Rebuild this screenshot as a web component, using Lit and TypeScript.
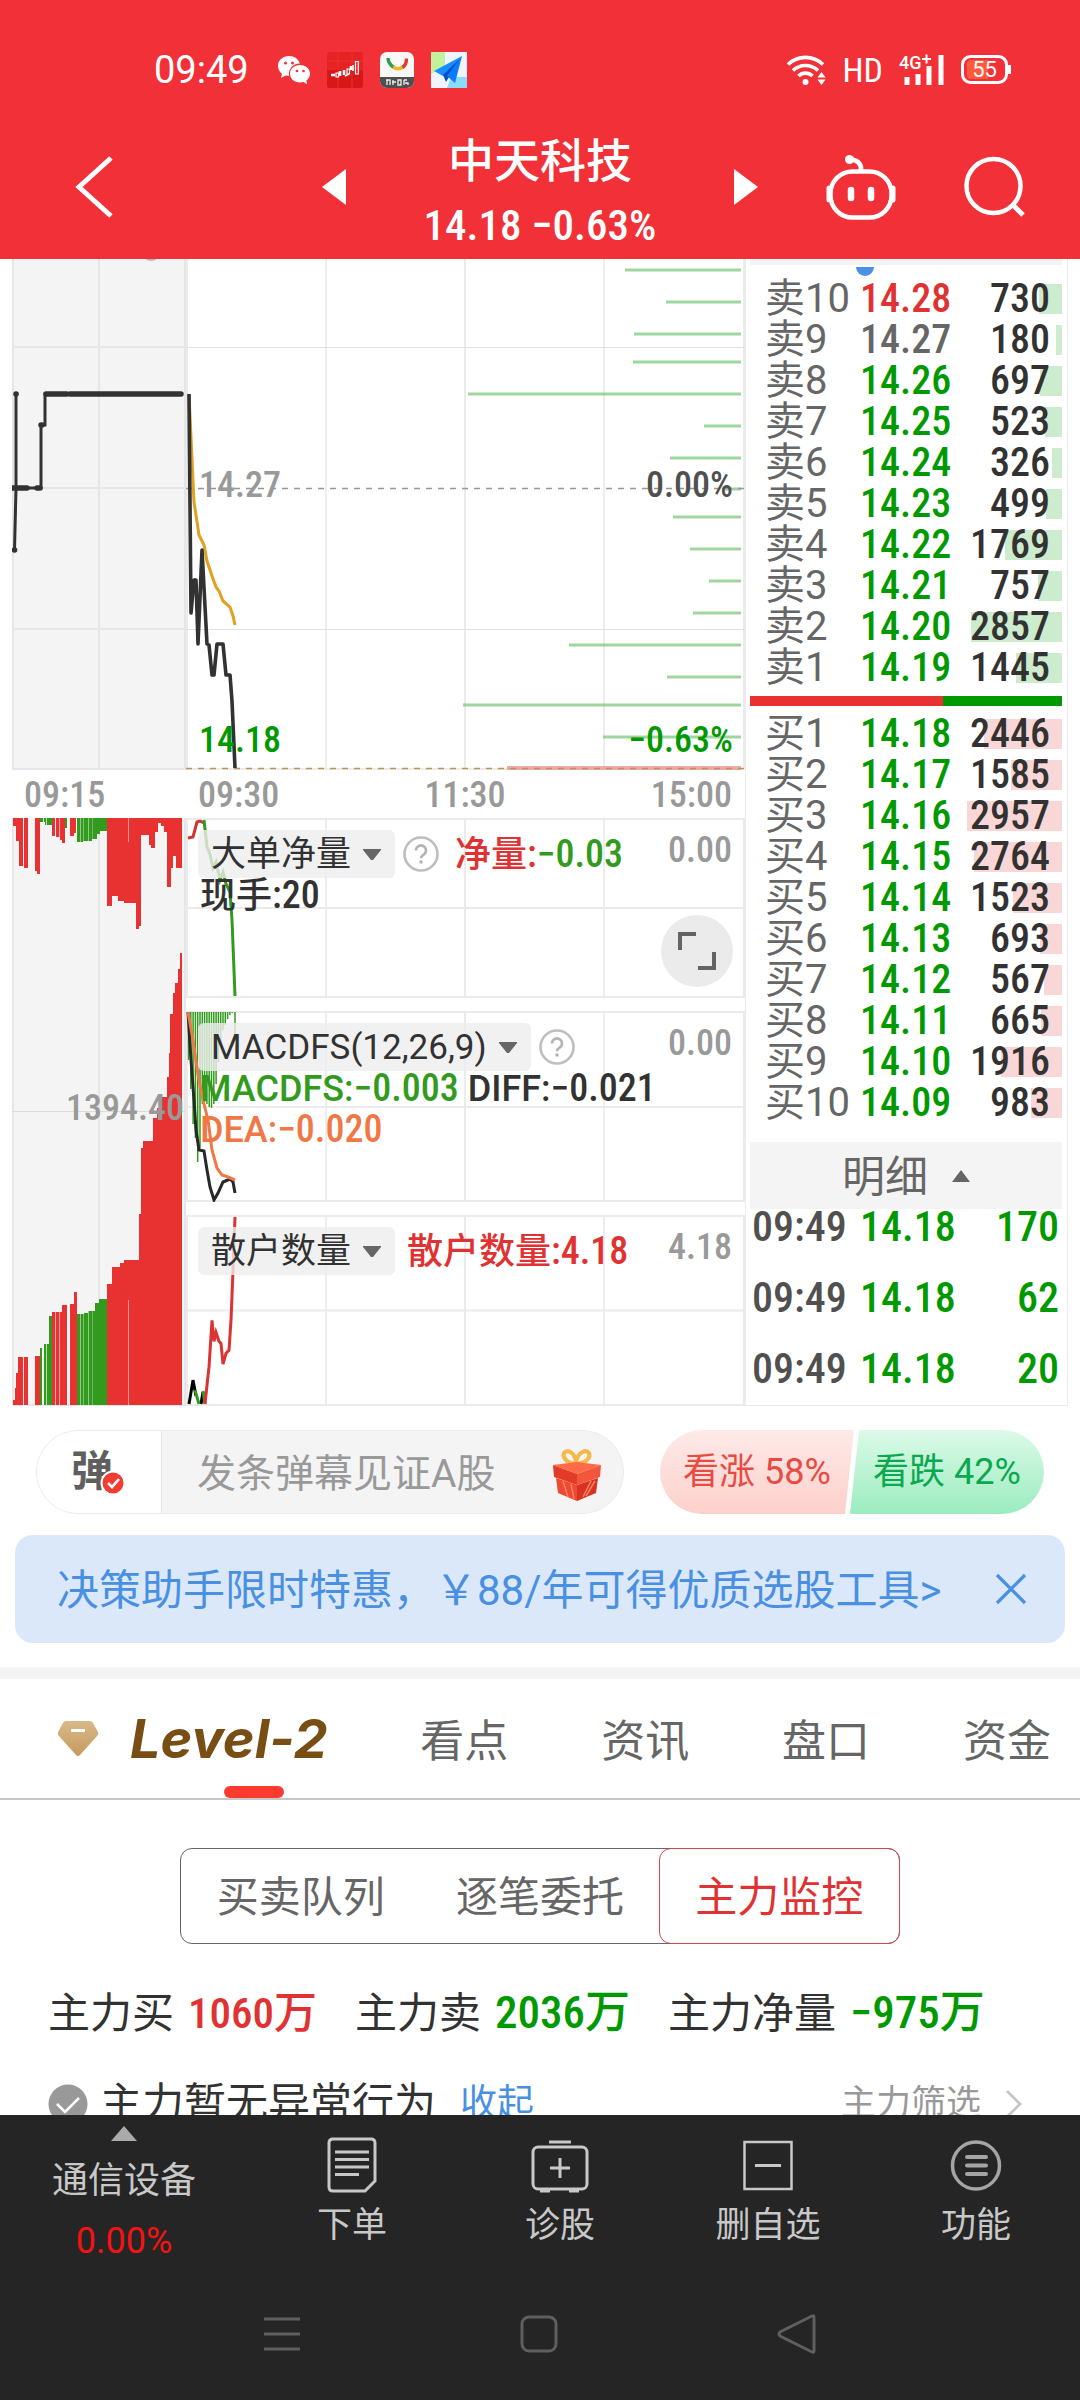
import { LitElement, html, css, svg } from "lit";
import { customElement } from "lit/decorators.js";

type Level = { label: string; price: string; volume: number; tone: string };
type Bar = [number, number, number, string];

const MAX_DEPTH = 3250;

const asks: Level[] = [
  ["卖10", "14.28", 730, "up"], ["卖9", "14.27", 180, "flat"], ["卖8", "14.26", 697, "down"],
  ["卖7", "14.25", 523, "down"], ["卖6", "14.24", 326, "down"], ["卖5", "14.23", 499, "down"],
  ["卖4", "14.22", 1769, "down"], ["卖3", "14.21", 757, "down"], ["卖2", "14.20", 2857, "down"],
  ["卖1", "14.19", 1445, "down"],
].map(([label, price, volume, tone]) => ({ label, price, volume, tone } as Level));

const bids: Level[] = [
  ["买1", "14.18", 2446], ["买2", "14.17", 1585], ["买3", "14.16", 2957], ["买4", "14.15", 2764],
  ["买5", "14.14", 1523], ["买6", "14.13", 693], ["买7", "14.12", 567], ["买8", "14.11", 665],
  ["买9", "14.10", 1916], ["买10", "14.09", 983],
].map(([label, price, volume]) => ({ label, price, volume, tone: "down" } as Level));

const trades = [["09:49", "14.18", "170"], ["09:49", "14.18", "62"], ["09:49", "14.18", "20"]];

/* [y, start x] of each price level in the profile drawn from the right edge */
const profile = [
  [270, 625], [302, 666], [334, 634], [362, 633], [394, 468], [426, 704], [458, 670], [489, 722],
  [517, 673], [549, 690], [581, 709], [613, 693], [645, 569], [677, 667], [705, 463], [737, 603],
];

const RED = "#e83232";
const GREEN = "#329b1e";

/* [x1, x2, y, colour]: hanging bars end at y, standing bars begin at y */
const hanging: Bar[] = [
  [13, 16, 826, RED], [16, 19, 841, RED], [19, 23, 866, RED], [24, 28, 868, RED], [35, 37, 871, RED],
  [37, 40, 874, RED], [40, 45, 822, GREEN], [45, 52, 825, GREEN], [52, 55, 836, RED], [56, 60, 837, RED],
  [60, 62, 840, RED], [62, 65, 843, RED], [65, 67, 828, GREEN], [70, 74, 836, RED], [74, 76, 833, RED],
  [77, 83, 842, GREEN], [83, 92, 841, GREEN], [92, 97, 839, GREEN], [97, 100, 834, GREEN],
  [100, 107, 831, GREEN], [107, 112, 906, RED], [112, 118, 896, RED], [118, 124, 901, RED],
  [124, 136, 903, RED], [136, 139, 929, RED], [139, 141, 926, RED], [141, 149, 835, RED],
  [149, 151, 845, RED], [151, 155, 848, RED], [155, 158, 832, RED], [158, 161, 823, RED],
  [161, 164, 826, RED], [164, 167, 832, RED], [167, 171, 887, RED], [171, 173, 868, RED],
  [173, 176, 856, RED], [176, 182, 868, RED],
];
const standing: Bar[] = [
  [13, 15, 1400, RED], [15, 16, 1388, RED], [16, 18, 1373, RED], [18, 28, 1357, RED], [35, 40, 1356, RED],
  [40, 42, 1348, GREEN], [44, 49, 1344, GREEN], [49, 52, 1316, GREEN], [52, 62, 1312, RED],
  [62, 67, 1305, RED], [70, 74, 1304, RED], [74, 77, 1292, RED], [77, 84, 1314, GREEN],
  [84, 88, 1313, GREEN], [88, 95, 1311, GREEN], [95, 99, 1303, GREEN], [99, 107, 1299, GREEN],
  [107, 112, 1284, RED], [112, 120, 1267, RED], [120, 124, 1263, RED], [124, 139, 1260, RED],
  [139, 141, 1214, RED], [141, 143, 1148, RED], [143, 153, 1141, RED], [153, 157, 1118, RED],
  [157, 162, 1108, RED], [162, 167, 1097, RED], [167, 169, 1077, RED], [169, 170, 1053, RED],
  [170, 173, 1014, RED], [173, 175, 993, RED], [175, 178, 983, RED], [178, 180, 969, RED],
  [180, 182, 953, RED],
];
const stripes: Array<[number, number]> = [
  [23, 0.9], [43, 0.9], [46, 0.7], [55, 0.6], [59, 0.6], [80, 0.5], [83, 0.4], [88, 0.5], [92, 0.3], [128, 0.5],
];
const macdBars = [
  1060, 1089, 1124, 1138, 1162, 1148, 1104, 1102, 1104, 1107, 1108, 1104, 1084, 1062, 1046, 1030, 1025, 1019, 1015, 1013,
];

const tri = (dir: "down" | "up") => html`<svg class="caret" viewBox="0 0 18 12" aria-hidden="true">
  <path d=${dir === "down" ? "M0 0h18v1l-8 10h-2L0 1z" : "M9 0l9 12H0z"} fill="#666" /></svg>`;

@customElement("app-root")
export class AppRoot extends LitElement {
  static styles = css`
    :host {
      --num: "Roboto Condensed", "Liberation Sans Narrow", Roboto, "Noto Sans CJK SC", sans-serif;
      --red: #e03232;
      --green: #009900;
      display: flex;
      flex-direction: column;
      height: 100vh;
      background: #fff;
      color: #323232;
      font-family: Roboto, "Noto Sans CJK SC", sans-serif;
      font-size: 36px;
      line-height: 40px;
    }
    * { box-sizing: border-box; }
    button { font: inherit; color: inherit; background: none; border: 0; padding: 0; margin: 0; }
    a { color: inherit; text-decoration: none; }
    svg { display: block; flex: none; overflow: visible; }
    h1 { margin: 0; font-size: 46px; line-height: 52px; font-weight: 500; }
    table { border-collapse: collapse; width: 100%; table-layout: fixed; }
    td, th { padding: 0; font-weight: inherit; text-align: left; }
    .num { font-family: var(--num); font-weight: 500; }
    .up { color: var(--red); }
    .down { color: var(--green); }
    .flat { color: #666; }

    .top { background: #f23037; color: #fff; height: 259px; flex: none; }
    .status { display: flex; align-items: center; padding: 52px 69px 0 154px; height: 88px; }
    .clock { font-size: 38px; }
    .apps { display: flex; gap: 16px; margin-left: 28px; align-items: center; }
    .radios { display: flex; align-items: center; gap: 16px; margin-left: auto; }
    .radios .hd { font-family: var(--num); font-size: 34px; }
    .nav { display: grid; grid-template-columns: 1fr auto 1fr; align-items: center; padding: 34px 54px 0; height: 163px; }
    .side { display: flex; align-items: center; padding-left: 20px; }
    .side.end { justify-content: flex-end; gap: 68px; padding-left: 0; }
    .stock { display: flex; align-items: center; gap: 78px; }
    .name { text-align: center; padding-top: 11px; }
    .quote { font-size: 43px; line-height: 48px; margin-top: 14px; }

    .body { flex: 1; min-height: 0; overflow: hidden; }
    .market { display: flex; }
    .charts {
      flex: 1; min-width: 0; display: grid; padding-left: 12px;
      grid-template-columns: 174px 1fr; grid-template-rows: 511px 48px 588px;
    }
    .pane { position: relative; overflow: hidden; }
    .pane > svg { position: absolute; inset: 0; width: 100%; height: 100%; }
    .pre { background: #f4f4f4; }
    .mid { position: relative; display: flex; justify-content: space-between; padding: 0 12px 0 13px; }
    .price { display: flex; flex-direction: column; justify-content: space-between; padding: 206px 0 10px; }
    .grey { color: #999; }
    .dark { color: #505050; }
    .axis { display: flex; justify-content: space-between; align-items: center; color: #999; padding: 2px 13px 0 12px; }
    .total { position: relative; text-align: right; padding: 270px 2px 0 0; color: #999; }
    .stack { display: flex; flex-direction: column; gap: 13px; min-width: 0; }
    .p1 { height: 180px; }
    .p2, .p3 { height: 191px; }
    .legend {
      position: relative; display: flex; align-items: center; gap: 8px; height: 60px;
      padding: 12px 13px 0 12px; margin-bottom: -3px;
    }
    .pick {
      display: flex; align-items: center; gap: 12px; height: 48px; padding: 2px 14px 0 13px; font-size: 35px;
      background: rgba(238, 238, 238, 0.8); border-radius: 6px; white-space: nowrap;
    }
    .caret { width: 18px; height: 12px; }
    .val { font-weight: 500; font-size: 36px; white-space: nowrap; margin-left: 8px; }
    .p3 .val { margin-left: 4px; }
    .val .num { font-size: 38px; }
    .ref { margin-left: auto; align-self: flex-start; }
    .lines { position: relative; padding-left: 14px; font-weight: 500; }
    .lines .num { font-size: 38px; }
    .leaf { color: #329b1e; }
    .orange { color: #f07846; }
    .expand {
      position: absolute; right: 12px; top: 97px; width: 72px; height: 72px; border-radius: 50%;
      background: #ebebeb; display: grid; place-items: center;
    }

    .book {
      width: 323px; flex: none; padding: 0 5px 0 4px; margin-right: 12px;
      border: solid #ebebeb; border-width: 0 1px 1px 1px; font-size: 40px; line-height: 41px;
    }
    .strip { height: 6px; background: #f4f4f4; }
    .dot { width: 18px; height: 9px; margin: 2px 0 2px 106px; border-radius: 0 0 9px 9px; background: #4a90e8; }
    .book td { position: relative; height: 41px; white-space: nowrap; }
    .c1 { width: 110px; }
    .c2 { width: 100px; }
    .book th { color: #666; padding-left: 15px; white-space: nowrap; }
    .book .num { font-size: 40px; }
    .book .qty { padding-right: 12px; text-align: right; color: #323232; }
    .depth { position: absolute; right: 0; top: 6px; height: 30px; }
    .depth.sell { background: #cdebcd; }
    .depth.buy { background: #fad7d7; }
    .qty span { position: relative; }
    .ratio { display: flex; height: 10px; margin: 8px 0 7px; background: #009900; }
    .ratio i { width: 62%; background: #e83232; }
    .detail {
      display: flex; width: 100%; height: 67px; margin-top: 19px; align-items: center; justify-content: center;
      gap: 24px; background: #f4f4f4; color: #666; font-size: 43px; padding-top: 4px;
    }
    .detail .caret { width: 18px; height: 12px; margin-top: -4px; }
    .book .ticks .num { font-size: 42px; }
    .book .ticks td { height: 71px; line-height: 36px; vertical-align: top; }
    .book .ticks tr:last-child td { height: 54px; }
    .ticks td:first-child { padding-left: 2px; color: #505050; }
    .ticks td:last-child { text-align: right; padding-right: 3px; }

    .social { display: flex; justify-content: space-between; padding: 24px 36px 0; }
    .barrage {
      display: flex; width: 588px; height: 84px; border: 1px solid #ebebeb; border-radius: 42px; overflow: hidden;
      background: #f4f4f4;
    }
    .toggle {
      position: relative; width: 125px; background: #fff; border-right: 1px solid #e6e6e6; color: #5f5f5f;
      font-weight: 700; font-size: 42px; padding-right: 14px;
    }
    .toggle svg { position: absolute; left: 63px; top: 39px; }
    .barrage input {
      flex: 1; min-width: 0; border: 0; background: none; padding: 3px 0 0 35px; font: inherit; font-size: 39px; outline: 0;
    }
    .barrage input::placeholder { color: #999; opacity: 1; }
    .gift { margin: 6px 20px 0 0; align-self: center; }
    .votes { display: flex; width: 384px; height: 84px; border-radius: 42px; overflow: hidden; font-size: 36px; }
    .vote { flex: 1; }
    .bull {
      color: #e84b41; background: linear-gradient(#feeae8, #fdd0cb);
      clip-path: polygon(0 0, 100% 0, calc(100% - 9px) 100%, 0 100%);
    }
    .bear {
      color: #0aa84f; background: linear-gradient(#dcfae8, #9becbf); margin-left: -4px;
      clip-path: polygon(9px 0, 100% 0, 100% 100%, 0 100%);
    }
    .promo {
      display: flex; align-items: center; justify-content: space-between; height: 108px; margin: 21px 15px 0;
      padding: 4px 38px 0 42px; border-radius: 18px; background: #dae8fa; color: #4a90e2; font-size: 42px;
    }
    .promo a { white-space: nowrap; }
    .promo button { margin-top: -4px; }
    .band { height: 12px; margin-top: 24px; background: #f4f4f4; }
    .tabs {
      display: flex; align-items: center; justify-content: space-between; height: 121px;
      border-bottom: 2px solid #c8c8c8; padding: 0 29px 0 56px; font-size: 44px; color: #666;
    }
    .tab { display: flex; align-items: center; height: 119px; padding-top: 6px; }
    .tab.on {
      position: relative; gap: 30px; color: #784e14; font-size: 54px; font-weight: 700; font-style: italic;
      font-family: Inter, "Noto Sans", sans-serif; padding-top: 0;
    }
    .tab.on::after {
      content: ""; position: absolute; left: 168px; bottom: 0; width: 60px; height: 12px; border-radius: 6px;
      background: #ff3b30;
    }
    .segments {
      display: flex; width: 720px; height: 96px; margin: 48px auto 0; font-size: 42px; color: #666;
      border: 1px solid #666; border-radius: 12px;
    }
    .seg { flex: 1; padding-top: 4px; }
    .seg.on { color: #e03232; border: 1px solid #d04848; border-radius: 12px; margin: -1px; }
    .stats { display: flex; gap: 38px; padding: 43px 48px 0; font-size: 42px; line-height: 52px; white-space: nowrap; }
    .stats b { margin-left: 14px; font-weight: 500; font-family: var(--num); font-size: 45px; }
    .stats b.up { font-size: 43px; }
    .note { display: flex; align-items: center; padding: 38px 57px 0 48px; font-size: 42px; line-height: 52px; }
    .note .text { margin-left: 12px; }
    .note a { margin-left: 24px; font-size: 37px; color: #4a90e2; }
    .note button { display: flex; align-items: center; gap: 24px; margin-left: auto; font-size: 35px; color: #999; }

    .bottom { flex: none; background: #252525; color: #c8c8c8; height: 285px; }
    .tools { display: grid; grid-template-columns: 248fr 208fr 208fr 208fr 208fr; height: 152px; }
    .tool { display: flex; flex-direction: column; align-items: center; padding-top: 22px; font-size: 35px; gap: 13px; }
    .tool.sector { padding-top: 11px; gap: 20px; font-size: 36px; }
    .rate { color: #f01414; }
    .keys { display: flex; justify-content: space-around; align-items: center; height: 134px; padding: 0 154px; }
  `;

  private vlines(top: number, h: number) {
    return svg`<path d="M326 ${top}v${h}M604 ${top}v${h}" stroke="#dcdcdc" stroke-width="1" fill="none"/>
      <path d="M465 ${top}v${h}M187 ${top}v${h}M744 ${top}v${h}" stroke="#ebebeb" stroke-width="2" fill="none"/>`;
  }

  private frame(top: number, h: number) {
    return svg`${this.vlines(top, h)}
      <path d="M186 ${top + 1}h559M186 ${top + Math.round(h / 2)}h559M186 ${top + h - 1}h559" stroke="#ebebeb" stroke-width="2" fill="none"/>`;
  }

  private levels(rows: Level[], side: string) {
    return html`<table aria-label=${side === "sell" ? "卖盘" : "买盘"}>
      <colgroup><col class="c1" /><col class="c2" /><col /></colgroup>
      <tbody>${rows.map((r) => html`<tr>
        <th scope="row">${r.label}</th>
        <td class="num ${r.tone}">${r.price}</td>
        <td class="num qty"><i class="depth ${side}" style="width:${Math.round((r.volume / MAX_DEPTH) * 104)}px"></i><span>${r.volume}</span></td>
      </tr>`)}</tbody></table>`;
  }

  private help() {
    return html`<button aria-label="说明"><svg width="36" height="36" viewBox="0 0 36 36">
      <circle cx="18" cy="18" r="16.5" fill="none" stroke="#bebebe" stroke-width="2.6" />
      <path d="M13 14.5a5 5 0 1 1 7.6 4.2c-1.8 1.2-2.6 1.8-2.6 3.6" fill="none" stroke="#b4b4b4" stroke-width="2.6" />
      <circle cx="18" cy="26" r="1.8" fill="#b4b4b4" /></svg></button>`;
  }

  private header() {
    return html`<header class="top">
      <div class="status">
        <span class="clock">09:49</span>
        <div class="apps">
          <svg width="34" height="36" viewBox="0 0 34 36" aria-hidden="true">
            <path d="M12 4C5.500 4 1 8.400 1 14c0 3.200 1.500 5.800 4 7.700L4 26l4.500-2.400c1.200.3 2.400.4 3.600.4C11 17 16 11.600 22.800 11.600 21.600 7 17.400 4 12 4z" fill="#fff" />
            <path d="M23 13c-5.700 0-10 3.900-10 8.800S17.300 30.500 23 30.500c1.200 0 2.300-.2 3.400-.5l3.900 2.200-1-3.600c2.300-1.700 3.700-4 3.700-6.800C33 16.900 28.700 13 23 13z" fill="#fff" />
            <g fill="#f23037"><circle cx="8.500" cy="11" r="1.500" /><circle cx="15.500" cy="11" r="1.500" /><circle cx="20" cy="19" r="1.300" /><circle cx="26.500" cy="19" r="1.300" /></g>
          </svg>
          <svg width="36" height="36" viewBox="0 0 36 36" aria-hidden="true">
            <rect width="36" height="36" rx="3" fill="#e62222" /><path d="M0 18h36v15a3 3 0 0 1-3 3H3a3 3 0 0 1-3-3z" fill="#d81818" />
            <path d="M0 9h36M11 0v36M25 0v36" stroke="#ea3636" stroke-width=".8" />
            <path d="M4 23h4M13 19v5M17 18v5M24 14v4" stroke="#fff" stroke-width="2.600" />
            <path d="M9 21h2.500v4H9zM20 17h2.500v5H20zM28.500 9.500h2.800V22h-2.800z" fill="none" stroke="#fff" stroke-width="1.200" />
            <path d="M26 13v6M18 24l4-2" stroke="#fff" stroke-width="1.600" />
          </svg>
          <svg width="36" height="36" viewBox="0 0 36 36" aria-hidden="true">
            <rect x="1" width="34" height="36" rx="7" fill="#f8f8f8" />
            <path d="M1 25h34v4a7 7 0 0 1-7 7H8a7 7 0 0 1-7-7z" fill="#4f4f4f" />
            <path d="M9 6c0 4 2 7 6 9.500" fill="none" stroke="#2f9e48" stroke-width="3.400" />
            <path d="M14 15c3 2 7 2 10 0" fill="none" stroke="#f0b62a" stroke-width="3.400" />
            <path d="M23.500 15.500c3-2 4-5 4-9" fill="none" stroke="#e23a30" stroke-width="3.400" />
            <path d="M8 28v5M7 28h4v5M14 28v5M13 30h4M19 28v5h3v-5zM25 28v5M28 28h-3M26 31h3v2" stroke="#eee" stroke-width="1.300" fill="none" />
          </svg>
          <svg width="36" height="36" viewBox="0 0 36 36" aria-hidden="true">
            <rect width="36" height="36" fill="#f0f4fc" /><path d="M0 0h14v14L0 22z" fill="#c4f29c" />
            <path d="M20 25h16v11H16z" fill="#8adcf8" />
            <path d="M31 4L3 19l9 5z" fill="#1490ff" /><path d="M31 4L12 23l3 7 3-5z" fill="#0a4fc8" />
            <path d="M31 4L16 24l8 7z" fill="#0a7cff" />
          </svg>
        </div>
        <div class="radios">
          <svg width="40" height="32" viewBox="0 0 40 32" aria-label="Wi-Fi">
            <g fill="none" stroke="#fff" stroke-width="3.600"><path d="M1 10.500a25 25 0 0 1 35 0" /><path d="M6 16.500a18 18 0 0 1 25 0" /><path d="M11.500 22a10 10 0 0 1 14 0" /></g>
            <circle cx="18.500" cy="28" r="3" fill="#fff" />
            <path d="M30.500 23.500L34.500 18l4 5.500zM30.500 25.500l4 5.500 4-5.500z" fill="#fff" />
          </svg>
          <span class="hd">HD</span>
          <svg width="46" height="32" viewBox="0 0 46 32" aria-label="4G+">
            <text x="0" y="15" font-size="18" font-family="Roboto, sans-serif" font-weight="500" fill="#fff">4G</text>
            <path d="M23 5h9M27.500 .5v9" stroke="#fff" stroke-width="2" />
            <path d="M8 23v8M19 20v11M30 12v19M42 1v30" stroke="#fff" stroke-width="5" />
          </svg>
          <svg width="50" height="30" viewBox="0 0 50 30" aria-label="电量 55">
            <rect x="1.500" y="1.500" width="44" height="26" rx="8" fill="none" stroke="#fff" stroke-width="3" />
            <path d="M10 5h17v19H10a4 4 0 0 1-4-4V9a4 4 0 0 1 4-4z" fill="#ff5a3c" />
            <path d="M48.500 10v9" stroke="#fff" stroke-width="3" />
            <text x="23.500" y="22" text-anchor="middle" font-size="22" font-family="Roboto, sans-serif" fill="#fff">55</text>
          </svg>
        </div>
      </div>
      <nav class="nav">
        <div class="side"><button aria-label="返回"><svg width="40" height="64" viewBox="0 0 40 64">
          <path d="M37 3L5 32l32 29" fill="none" stroke="#fff" stroke-width="5" /></svg></button></div>
        <div class="stock">
          <button aria-label="上一只"><svg width="24" height="36" viewBox="0 0 24 36"><path d="M24 0v36L0 18z" fill="#fff" /></svg></button>
          <div class="name"><h1>中天科技</h1><div class="quote num">14.18 −0.63%</div></div>
          <button aria-label="下一只"><svg width="24" height="36" viewBox="0 0 24 36"><path d="M0 0v36l24-18z" fill="#fff" /></svg></button>
        </div>
        <div class="side end">
          <button aria-label="智能助手"><svg width="70" height="66" viewBox="0 0 70 66">
            <rect x="4.500" y="17.500" width="61" height="46" rx="22" fill="none" stroke="#fff" stroke-width="4.500" />
            <path d="M3 34v12M67 34v12" stroke="#fff" stroke-width="5" stroke-linecap="round" />
            <path d="M25 36v8M45 36v8" stroke="#fff" stroke-width="6.500" stroke-linecap="round" />
            <path d="M35 17c1-8-4-11-11-12" fill="none" stroke="#fff" stroke-width="4.500" /><circle cx="23.500" cy="5.500" r="4.500" fill="#fff" />
          </svg></button>
          <button aria-label="搜索"><svg width="62" height="62" viewBox="0 0 62 62">
            <circle cx="29.500" cy="30" r="27" fill="none" stroke="#fff" stroke-width="4.500" />
            <path d="M48 48l11 11" stroke="#fff" stroke-width="5" /></svg></button>
        </div>
      </nav>
    </header>`;
  }

  private chart() {
    return html`<div class="charts">
      <div class="pane pre">
        <svg viewBox="12 259 174 511" preserveAspectRatio="none" aria-hidden="true">
          <path d="M13 259v511M99 259v511M185 259v511M12 347h174M12 488h174M12 629h174M12 769h174" stroke="#e6e6e6" stroke-width="2" />
          <circle cx="151" cy="251" r="10" fill="#bbb" />
          <path d="M16 394v94l-1.500 62M12 488h29v-63h4v-31h136" fill="none" stroke="#323232" stroke-width="3" />
          <path d="M46 394h21M70 394h111M13 488h14M37 488h3M41 425h1M16 394h.1M14.500 550h.1" stroke="#323232" stroke-width="5.500" stroke-linecap="round" />
        </svg>
      </div>
      <div class="pane price">
        <svg viewBox="186 259 559 511" preserveAspectRatio="none" aria-hidden="true">
          ${this.vlines(259, 511)}
          <path d="M186 347.500h559M186 629.500h559" stroke="#e1e1e1" stroke-width="1" />
          <path d="M186 769h559" stroke="#ebebeb" stroke-width="2" />
          ${profile.map(([y, x]) => svg`<path d="M${x} ${y}H741" stroke="#5ab95a" stroke-opacity=".58" stroke-width="3" />`)}
          <path d="M507 768H741" stroke="#f08c8c" stroke-opacity=".75" stroke-width="4" />
          <path d="M186 488.500h559" stroke="#969696" stroke-width="1.500" stroke-dasharray="6 6" />
          <path d="M186 768.500h559" stroke="#b4965a" stroke-width="1.500" stroke-dasharray="6 6" />
          <path d="M189 394L194 502 199 535 204 545 207 561 212 576 216 587 219 591 223 601 230 607 233 616 235 625" fill="none" stroke="#e1a01e" stroke-width="3" />
          <path d="M189 394L191 613 194 580H196L198 644 202 550 207 644 209 645 212 675H214L217 644H223L226 675H230L232 701 235 768" fill="none" stroke="#323232" stroke-width="3.600" stroke-linejoin="round" />
        </svg>
        <div class="mid num"><span class="grey">14.27</span><span class="dark">0.00%</span></div>
        <div class="mid num down"><span>14.18</span><span>−0.63%</span></div>
      </div>
      <div class="axis num"><span>09:15</span></div>
      <div class="axis num"><span>09:30</span><span>11:30</span><span>15:00</span></div>
      <div class="pane pre">
        <svg viewBox="12 818 174 588" preserveAspectRatio="none" aria-hidden="true">
          <path d="M13 818v588M99 818v588M185 818v588M12 1405h174" stroke="#e6e6e6" stroke-width="2" />
          <path d="M12 1111.500h174" stroke="#dcdcdc" stroke-width="1" />
          ${hanging.map(([a, b, y, c]) => svg`<rect x=${a} y="818" width=${b - a} height=${y - 818} fill=${c} />`)}
          ${standing.map(([a, b, y, c]) => svg`<rect x=${a} y=${y} width=${b - a} height=${1405 - y} fill=${c} />`)}
          ${stripes.map(([x, o]) => svg`<path d="M${x}.5 818v24M${x}.5 1300v105" stroke="#f4f4f4" stroke-opacity=${o} stroke-width="1" />`)}
        </svg>
        <div class="total num">1394.40</div>
      </div>
      <div class="stack">
        <section class="pane p1">
          <svg viewBox="186 818 559 180" preserveAspectRatio="none" aria-hidden="true">
            ${this.frame(818, 180)}
            <path d="M188 838L193 837 197 822 200 821 204 823" fill="none" stroke="#d23232" stroke-width="3" />
            <path d="M204 820L207 847 210 854 213 868 216 862 220 880 223 872 226 884 230 892 232 920 235 996" fill="none" stroke=${GREEN} stroke-width="3" />
          </svg>
          <div class="legend">
            <button class="pick">大单净量${tri("down")}</button>${this.help()}
            <span class="val up">净量<span class="num">:</span><span class="num leaf">−0.03</span></span>
            <span class="ref num grey">0.00</span>
          </div>
          <div class="lines">现手<span class="num">:20</span></div>
          <button class="expand" aria-label="全屏"><svg width="38" height="38" viewBox="0 0 38 38">
            <path d="M2 18V2h16M36 20v16H20" fill="none" stroke="#646464" stroke-width="4" /></svg></button>
        </section>
        <section class="pane p2">
          <svg viewBox="186 1011 559 191" preserveAspectRatio="none" aria-hidden="true">
            ${this.frame(1011, 191)}
            ${macdBars.map((y, i) => svg`<path d="M${188.5 + i * 2.3} 1012V${y}" stroke=${GREEN} stroke-width="1.500" />`)}
            <path d="M235 1012V1041" stroke=${GREEN} stroke-width="1.500" />
            <path d="M188 1012L191 1060 194 1100 196 1130 199 1150 204 1151 207 1170 210 1187 214 1200 218 1193 223 1182 230 1179 233 1182 235 1193" fill="none" stroke="#282828" stroke-width="3" />
            <path d="M188 1012L193 1040 198 1075 203 1100 208 1120 212 1150 217 1168 222 1175 228 1177 235 1180" fill="none" stroke="#f07846" stroke-width="3" />
          </svg>
          <div class="legend">
            <button class="pick">MACDFS(12,26,9)${tri("down")}</button>${this.help()}
            <span class="ref num grey">0.00</span>
          </div>
          <div class="lines"><span class="leaf">MACDFS:<span class="num">−0.003</span></span> DIFF:<span class="num">−0.021</span></div>
          <div class="lines orange">DEA:<span class="num">−0.020</span></div>
        </section>
        <section class="pane p3">
          <svg viewBox="186 1214 559 192" preserveAspectRatio="none" aria-hidden="true">
            ${this.frame(1214, 192)}
            <path d="M189 1404L193 1380 196 1396M201 1404L203 1392" fill="none" stroke="#000" stroke-width="3" />
            <path d="M195 1390L199 1404M203 1391L205 1404" fill="none" stroke=${GREEN} stroke-width="3" />
            <path d="M205 1404L207 1385 209 1367 212 1320 214 1341 216 1332 219 1341 221 1343 223 1364 226 1353 229 1350 231 1320 233 1270 235 1216" fill="none" stroke="#dc3232" stroke-width="3" />
          </svg>
          <div class="legend">
            <button class="pick">散户数量${tri("down")}</button>
            <span class="val up">散户数量<span class="num">:4.18</span></span>
            <span class="ref num grey">4.18</span>
          </div>
        </section>
      </div>
    </div>`;
  }

  private book() {
    return html`<aside class="book">
      <div class="strip"></div><div class="dot"></div>
      ${this.levels(asks, "sell")}
      <div class="ratio"><i></i></div>
      ${this.levels(bids, "buy")}
      <button class="detail">明细${tri("up")}</button>
      <table class="ticks" aria-label="成交明细">
        <colgroup><col class="c1" /><col class="c2" /><col /></colgroup>
        <tbody>${trades.map(([t, p, v]) => html`<tr>
          <td class="num">${t}</td><td class="num down">${p}</td><td class="num down">${v}</td></tr>`)}</tbody>
      </table>
    </aside>`;
  }

  private social() {
    return html`<div class="social">
      <div class="barrage">
        <button class="toggle" aria-label="弹幕开关">弹<svg width="26" height="26" viewBox="0 0 26 26">
          <circle cx="13" cy="13" r="11.500" fill="#f03c32" stroke="#fff" stroke-width="2" />
          <path d="M8 13l4 4 7-8" fill="none" stroke="#fff" stroke-width="2.600" /></svg></button>
        <input type="text" placeholder="发条弹幕见证A股" aria-label="发条弹幕见证A股" />
        <button class="gift" aria-label="礼物"><svg width="52" height="54" viewBox="0 0 52 54">
          <path d="M25 16C16 15 11 10 13 5c3-4 11-1 12 9 2-10 10-13 13-9 2 5-3 10-13 11z" fill="none" stroke="#f8b848" stroke-width="4" />
          <path d="M2 17l24-3 24 3-24 9z" fill="#ff6a48" /><path d="M2 17l24 9v11L3 29z" fill="#e23c28" />
          <path d="M50 17l-24 9v11l23-8z" fill="#f4563c" /><path d="M5 30l21 7v16L7 45z" fill="#ee4a32" />
          <path d="M47 30l-21 7v16l19-8z" fill="#d93222" />
          <path d="M12 33l5 16M20 36l3 15M40 33l-8 16M44 33l-9 15" stroke="#ff8264" stroke-width="1.500" />
        </svg></button>
      </div>
      <div class="votes"><button class="vote bull">看涨 58%</button><button class="vote bear">看跌 42%</button></div>
    </div>`;
  }

  private feed() {
    return html`<div class="promo"><a href="#promo">决策助手限时特惠，￥88/年可得优质选股工具&gt;</a>
        <button aria-label="关闭"><svg width="32" height="32" viewBox="0 0 32 32"><path d="M2 2l28 28M30 2L2 30" stroke="#4a90e2" stroke-width="3.200" /></svg></button></div>
      <div class="band"></div>
      <nav class="tabs">
        <button class="tab on"><svg width="44" height="44" viewBox="0 0 44 44" aria-hidden="true">
          <defs><linearGradient id="gem" x2="0" y2="1"><stop stop-color="#d8b98a" /><stop offset="1" stop-color="#c69a5c" /></linearGradient></defs>
          <path d="M10 4h24q2 0 3 2l5 9q1 2-1 4L24 38q-2 2-4 0L3 19q-2-2-1-4l5-9q1-2 3-2z" fill="url(#gem)" />
          <path d="M15 13.500h14" stroke="#fff" stroke-width="3" /></svg>Level-2</button>
        ${["看点", "资讯", "盘口", "资金"].map((t) => html`<button class="tab">${t}</button>`)}
      </nav>
      <div class="segments">
        ${["买卖队列", "逐笔委托", "主力监控"].map((t, i) => html`<button class="seg ${i === 2 ? "on" : ""}">${t}</button>`)}
      </div>
      <div class="stats">
        <span>主力买<b class="up">1060万</b></span><span>主力卖<b class="down">2036万</b></span><span>主力净量<b class="down">−975万</b></span>
      </div>
      <div class="note">
        <svg width="40" height="40" viewBox="0 0 40 40" aria-hidden="true"><circle cx="20" cy="20" r="19.500" fill="#999" />
          <path d="M9 20l8 8 14-14" fill="none" stroke="#fff" stroke-width="2.500" /></svg>
        <span class="text">主力暂无异常行为</span><a href="#fold">收起</a>
        <button>主力筛选<svg width="18" height="30" viewBox="0 0 18 30"><path d="M2 2l13 13L2 28" fill="none" stroke="#c8c8c8" stroke-width="3" /></svg></button>
      </div>`;
  }

  private footer() {
    return html`<footer class="bottom">
      <nav class="tools">
        <button class="tool sector"><svg width="26" height="15" viewBox="0 0 26 15"><path d="M13 0l13 15H0z" fill="#aaa" /></svg>
          <span>通信设备</span><span class="rate">0.00%</span></button>
        <button class="tool"><svg width="50" height="56" viewBox="0 0 50 56" fill="none" stroke="#c8c8c8" stroke-width="3">
          <path d="M6 2h38q4 0 4 4v38L38 54H6q-4 0-4-4V6q0-4 4-4z" /><path d="M8 15h34M8 22.500h34M8 30h34M8 37.500h24" /></svg>下单</button>
        <button class="tool"><svg width="58" height="56" viewBox="0 0 58 56" fill="none" stroke="#c8c8c8" stroke-width="3">
          <rect x="2" y="10" width="54" height="42" rx="5" /><path d="M18 5h22M29 21v20M19 31h20M9 54h10M38 54h10" /></svg>诊股</button>
        <button class="tool"><svg width="50" height="56" viewBox="0 0 50 56" fill="none" stroke="#c8c8c8" stroke-width="2.500">
          <rect x="1.500" y="5" width="47" height="47" /><path d="M12 28.500h26" stroke-width="3" /></svg>删自选</button>
        <button class="tool"><svg width="52" height="56" viewBox="0 0 52 56" fill="none" stroke="#a5a5a5" stroke-width="3.500">
          <circle cx="26" cy="28.500" r="23.500" /><path d="M17 20h19M17 28.500h19M17 37h19" stroke-width="4" stroke-linecap="round" /></svg>功能</button>
      </nav>
      <nav class="keys">
        <button aria-label="最近任务"><svg width="38" height="40" viewBox="0 0 38 40"><path d="M1 5h36M1 20h36M1 35h36" stroke="#5f5f5f" stroke-width="3" /></svg></button>
        <button aria-label="主屏幕"><svg width="38" height="40" viewBox="0 0 38 40"><rect x="2" y="3" width="34" height="34" rx="7" fill="none" stroke="#5f5f5f" stroke-width="3" /></svg></button>
        <button aria-label="后退"><svg width="40" height="40" viewBox="0 0 40 40"><path d="M37 3v34q0 2-2 1L3 22q-2-2 0-4L35 2q2-1 2 1z" fill="none" stroke="#5f5f5f" stroke-width="3" /></svg></button>
      </nav>
    </footer>`;
  }

  render() {
    return html`${this.header()}
      <main class="body"><div class="market">${this.chart()}${this.book()}</div>${this.social()}${this.feed()}</main>
      ${this.footer()}`;
  }
}
